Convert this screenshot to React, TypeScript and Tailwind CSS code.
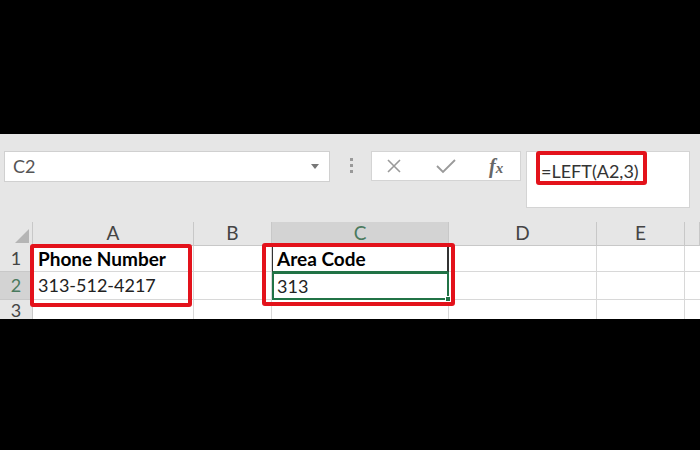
import React from "react";

const font = { fontFamily: "Lato, 'Open Sans', sans-serif" };

function RedBox({ className }: { className: string }) {
  return <div className={`absolute border-[4px] border-[#e3121b] rounded-[3px] ${className}`} />;
}

export default function App() {
  const cols = ["A", "B", "C", "D", "E", ""];
  return (
    <div className="w-[700px] h-[450px] bg-black relative overflow-hidden" style={font}>
      <div className="h-[134px]" />
      <div className="h-[185px] bg-[#e6e6e6] flex flex-col">
        {/* toolbar */}
        <div className="h-[88px] flex items-start pt-[17px]">
          <div className="ml-[4px] w-[326px] h-[31px] bg-white border border-[#d0d0d0] flex items-center justify-between pl-[8px] pr-[10px]">
            <span className="text-[18px] text-[#555]">C2</span>
            <svg width="8" height="5" viewBox="0 0 8 5"><path d="M0 0 L8 0 L4 5 Z" fill="#777" /></svg>
          </div>
          <div className="ml-[20px] mt-[7px] flex flex-col gap-[3px]">
            <div className="w-[3px] h-[3px] bg-[#999]" />
            <div className="w-[3px] h-[3px] bg-[#999]" />
            <div className="w-[3px] h-[3px] bg-[#999]" />
          </div>
          <div className="ml-[18px] w-[150px] h-[30px] bg-white border border-[#d4d4d4] flex items-center">
            <svg className="ml-[14px]" width="16" height="16" viewBox="0 0 16 16"><path d="M2 2 L14 14 M14 2 L2 14" stroke="#9a9a9a" strokeWidth="1.6" /></svg>
            <svg className="ml-[34px]" width="20" height="16" viewBox="0 0 20 16"><path d="M1 8 L7 14 L19 2" stroke="#9a9a9a" strokeWidth="1.8" fill="none" /></svg>
            <span className="ml-[33px] text-[20px] italic font-bold text-[#666]" style={{ fontFamily: "'Liberation Serif', serif" }}>f<span className="text-[15px]">x</span></span>
          </div>
          <div className="ml-[5px] w-[164px] h-[57px] bg-white border border-[#d4d4d4] pl-[14px] pt-[6px]">
            <span className="text-[18px] text-[#333]">=LEFT(A2,3)</span>
          </div>
        </div>
        {/* grid */}
        <div
          className="grid bg-white"
          style={{ gridTemplateColumns: "33px 161px 78px 177px 148px 88px 15px", gridTemplateRows: "24px 26px 28px 19px" }}
        >
          <div className="bg-[#e6e6e6] border-r border-[#c8c8c8] relative">
            <svg className="absolute right-[3px] bottom-[3px]" width="14" height="14" viewBox="0 0 14 14"><path d="M14 0 L14 14 L0 14 Z" fill="#b5b5b5" /></svg>
          </div>
          {cols.map((c, i) => (
            <div
              key={"h" + i}
              className={`flex items-center justify-center text-[19px] border-r border-b border-[#c8c8c8] ${c === "C" ? "bg-[#d3d3d3] text-[#4a7a5e]" : "bg-[#e6e6e6] text-[#444]"}`}
            >
              {c}
            </div>
          ))}
          {/* row 1 */}
          <div className="bg-[#e6e6e6] border-r border-b border-[#c8c8c8] flex items-center justify-center text-[18px] text-[#444]">1</div>
          <div className="border-r border-b border-[#d8d8d8] flex items-center pl-[5px] pt-[2px] text-[19px] font-bold text-black">Phone Number</div>
          <div className="border-r border-b border-[#d8d8d8]" />
          <div className="border-l border-l-[#333] border-r-2 border-r-[#333] border-b border-b-[#217346] flex items-center pl-[4px] pt-[2px] text-[19px] font-bold text-black">Area Code</div>
          <div className="border-r border-b border-[#d8d8d8]" />
          <div className="border-r border-b border-[#d8d8d8]" />
          <div className="border-b border-[#d8d8d8]" />
          {/* row 2 */}
          <div className="bg-[#d3d3d3] border-r border-b border-[#c8c8c8] flex items-center justify-center text-[18px] text-[#4a7a5e]">2</div>
          <div className="border-r border-b border-[#d8d8d8] flex items-center pl-[5px] text-[18px] text-[#222]">313-512-4217</div>
          <div className="border-r border-b border-[#d8d8d8]" />
          <div className="relative border-2 border-[#217346] flex items-center pl-[3px] text-[18px] text-[#222]">
            313
            <div className="absolute right-[-4px] bottom-[-4px] w-[6px] h-[6px] bg-[#217346] border border-white" />
          </div>
          <div className="border-r border-b border-[#d8d8d8]" />
          <div className="border-r border-b border-[#d8d8d8]" />
          <div className="border-b border-[#d8d8d8]" />
          {/* row 3 */}
          <div className="bg-[#e6e6e6] border-r border-[#c8c8c8] flex items-start justify-center text-[18px] text-[#444] leading-[20px]">3</div>
          <div className="border-r border-[#d8d8d8]" />
          <div className="border-r border-[#d8d8d8]" />
          <div className="border-r border-[#d8d8d8]" />
          <div className="border-r border-[#d8d8d8]" />
          <div className="border-r border-[#d8d8d8]" />
          <div />
        </div>
      </div>
      <RedBox className="left-[30px] top-[244px] w-[162px] h-[63px]" />
      <RedBox className="left-[262px] top-[243px] w-[193px] h-[63px]" />
      <RedBox className="left-[536px] top-[151px] w-[111px] h-[34px]" />
    </div>
  );
}
